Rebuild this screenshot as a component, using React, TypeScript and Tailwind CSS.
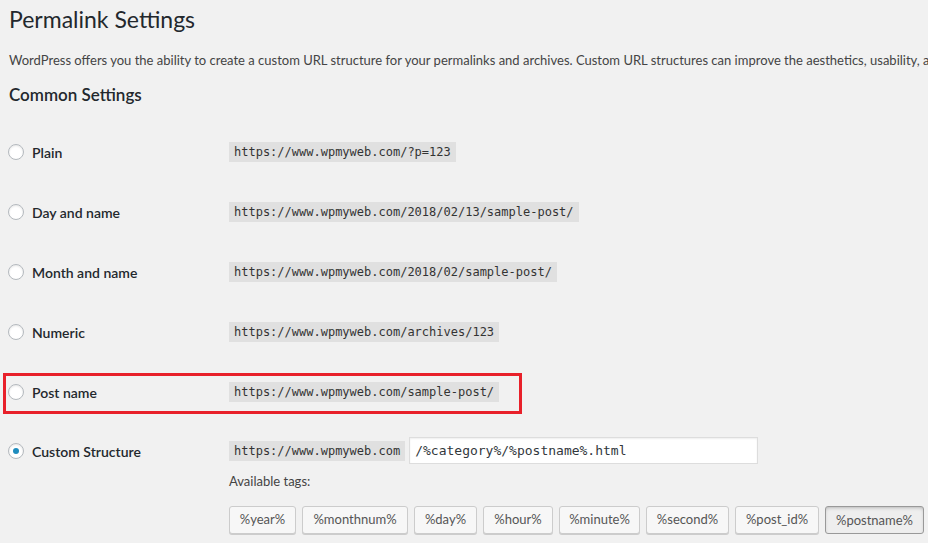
import React from "react";

const rows = [
  { label: "Plain", url: "https://www.wpmyweb.com/?p=123" },
  { label: "Day and name", url: "https://www.wpmyweb.com/2018/02/13/sample-post/" },
  { label: "Month and name", url: "https://www.wpmyweb.com/2018/02/sample-post/" },
  { label: "Numeric", url: "https://www.wpmyweb.com/archives/123" },
  { label: "Post name", url: "https://www.wpmyweb.com/sample-post/" },
];

const tags: { t: string; w: string; active?: boolean }[] = [
  { t: "%year%", w: "w-[67px]" },
  { t: "%monthnum%", w: "w-[106px]" },
  { t: "%day%", w: "w-[63px]" },
  { t: "%hour%", w: "w-[70px]" },
  { t: "%minute%", w: "w-[81px]" },
  { t: "%second%", w: "w-[83px]" },
  { t: "%post_id%", w: "w-[84px]" },
  { t: "%postname%", w: "w-[99px]", active: true },
];

function Radio({ checked }: { checked?: boolean }) {
  return (
    <span className="flex h-4 w-4 shrink-0 items-center justify-center rounded-full border border-[#b4b9be] bg-white shadow-[inset_0_1px_2px_rgba(0,0,0,0.1)]">
      {checked && <span className="h-[6px] w-[6px] rounded-full bg-[#1e8cbe]" />}
    </span>
  );
}

function Code({ children }: { children: React.ReactNode }) {
  return (
    <code className="inline-block h-[20px] whitespace-nowrap bg-[#e0e0e0] px-[5px] font-['DejaVu_Sans_Mono',monospace] text-[12px] leading-[20px] text-[#333]">
      {children}
    </code>
  );
}

export default function App() {
  return (
    <div className="relative h-[543px] w-[928px] overflow-hidden bg-[#f1f1f1] pl-[8px] font-['Lato',sans-serif] text-[#444]">
      <h1 className="ml-[1px] pt-[5px] text-[23px] font-normal leading-[29px] text-[#23282d]">
        Permalink Settings
      </h1>
      <p className="ml-[1px] mt-[16px] whitespace-nowrap text-[13px] leading-[20px]">
        WordPress offers you the ability to create a custom URL structure for your permalinks and archives. Custom URL structures can improve the aesthetics, usability, and forward-compatibility of your links.
      </p>
      <h2 className="ml-[1px] mt-[13px] text-[17px] font-semibold leading-[24px] text-[#23282d]">
        Common Settings
      </h2>
      <div className="mt-[15px]">
        {rows.map((r) => (
          <div key={r.label} className="flex h-[60px] items-center">
            <div className="flex w-[221px] items-center gap-[8px]">
              <Radio />
              <span className="text-[14px] font-semibold text-[#23282d]">{r.label}</span>
            </div>
            <Code>{r.url}</Code>
          </div>
        ))}
        <div className="mt-[15px] flex">
          <div className="flex h-[28px] w-[221px] items-center gap-[8px]">
            <Radio checked />
            <span className="text-[14px] font-semibold text-[#23282d]">Custom Structure</span>
          </div>
          <div className="flex flex-col">
            <div className="flex h-[27px] items-center gap-[4px]">
              <Code>https://www.wpmyweb.com</Code>
              <div className="flex h-[27px] w-[349px] items-center border border-[#ddd] bg-white px-[5px] font-['DejaVu_Sans_Mono',monospace] text-[13px] text-[#32373c] shadow-[inset_0_1px_2px_rgba(0,0,0,0.07)]">
                /%category%/%postname%.html
              </div>
            </div>
            <div className="mt-[7px] text-[13px] leading-[20px]">Available tags:</div>
            <div className="mt-[15px] flex gap-[6px]">
              {tags.map((tag) => (
                <span
                  key={tag.t}
                  className={
                    tag.active
                      ? `${tag.w} flex h-[28px] items-center justify-center rounded-[3px] border border-[#999] bg-[#eee] pt-[2px] text-[13px] text-[#555] shadow-[inset_0_2px_5px_-3px_rgba(0,0,0,0.5)]`
                      : `${tag.w} flex h-[28px] items-center justify-center rounded-[3px] border border-[#ccc] bg-[#f7f7f7] text-[13px] text-[#555] shadow-[0_1px_0_#ccc]`
                  }
                >
                  {tag.t}
                </span>
              ))}
            </div>
          </div>
        </div>
      </div>
      <div className="pointer-events-none absolute left-[3px] top-[373px] h-[41px] w-[519px] border-[3px] border-[#e8202a]" />
    </div>
  );
}
